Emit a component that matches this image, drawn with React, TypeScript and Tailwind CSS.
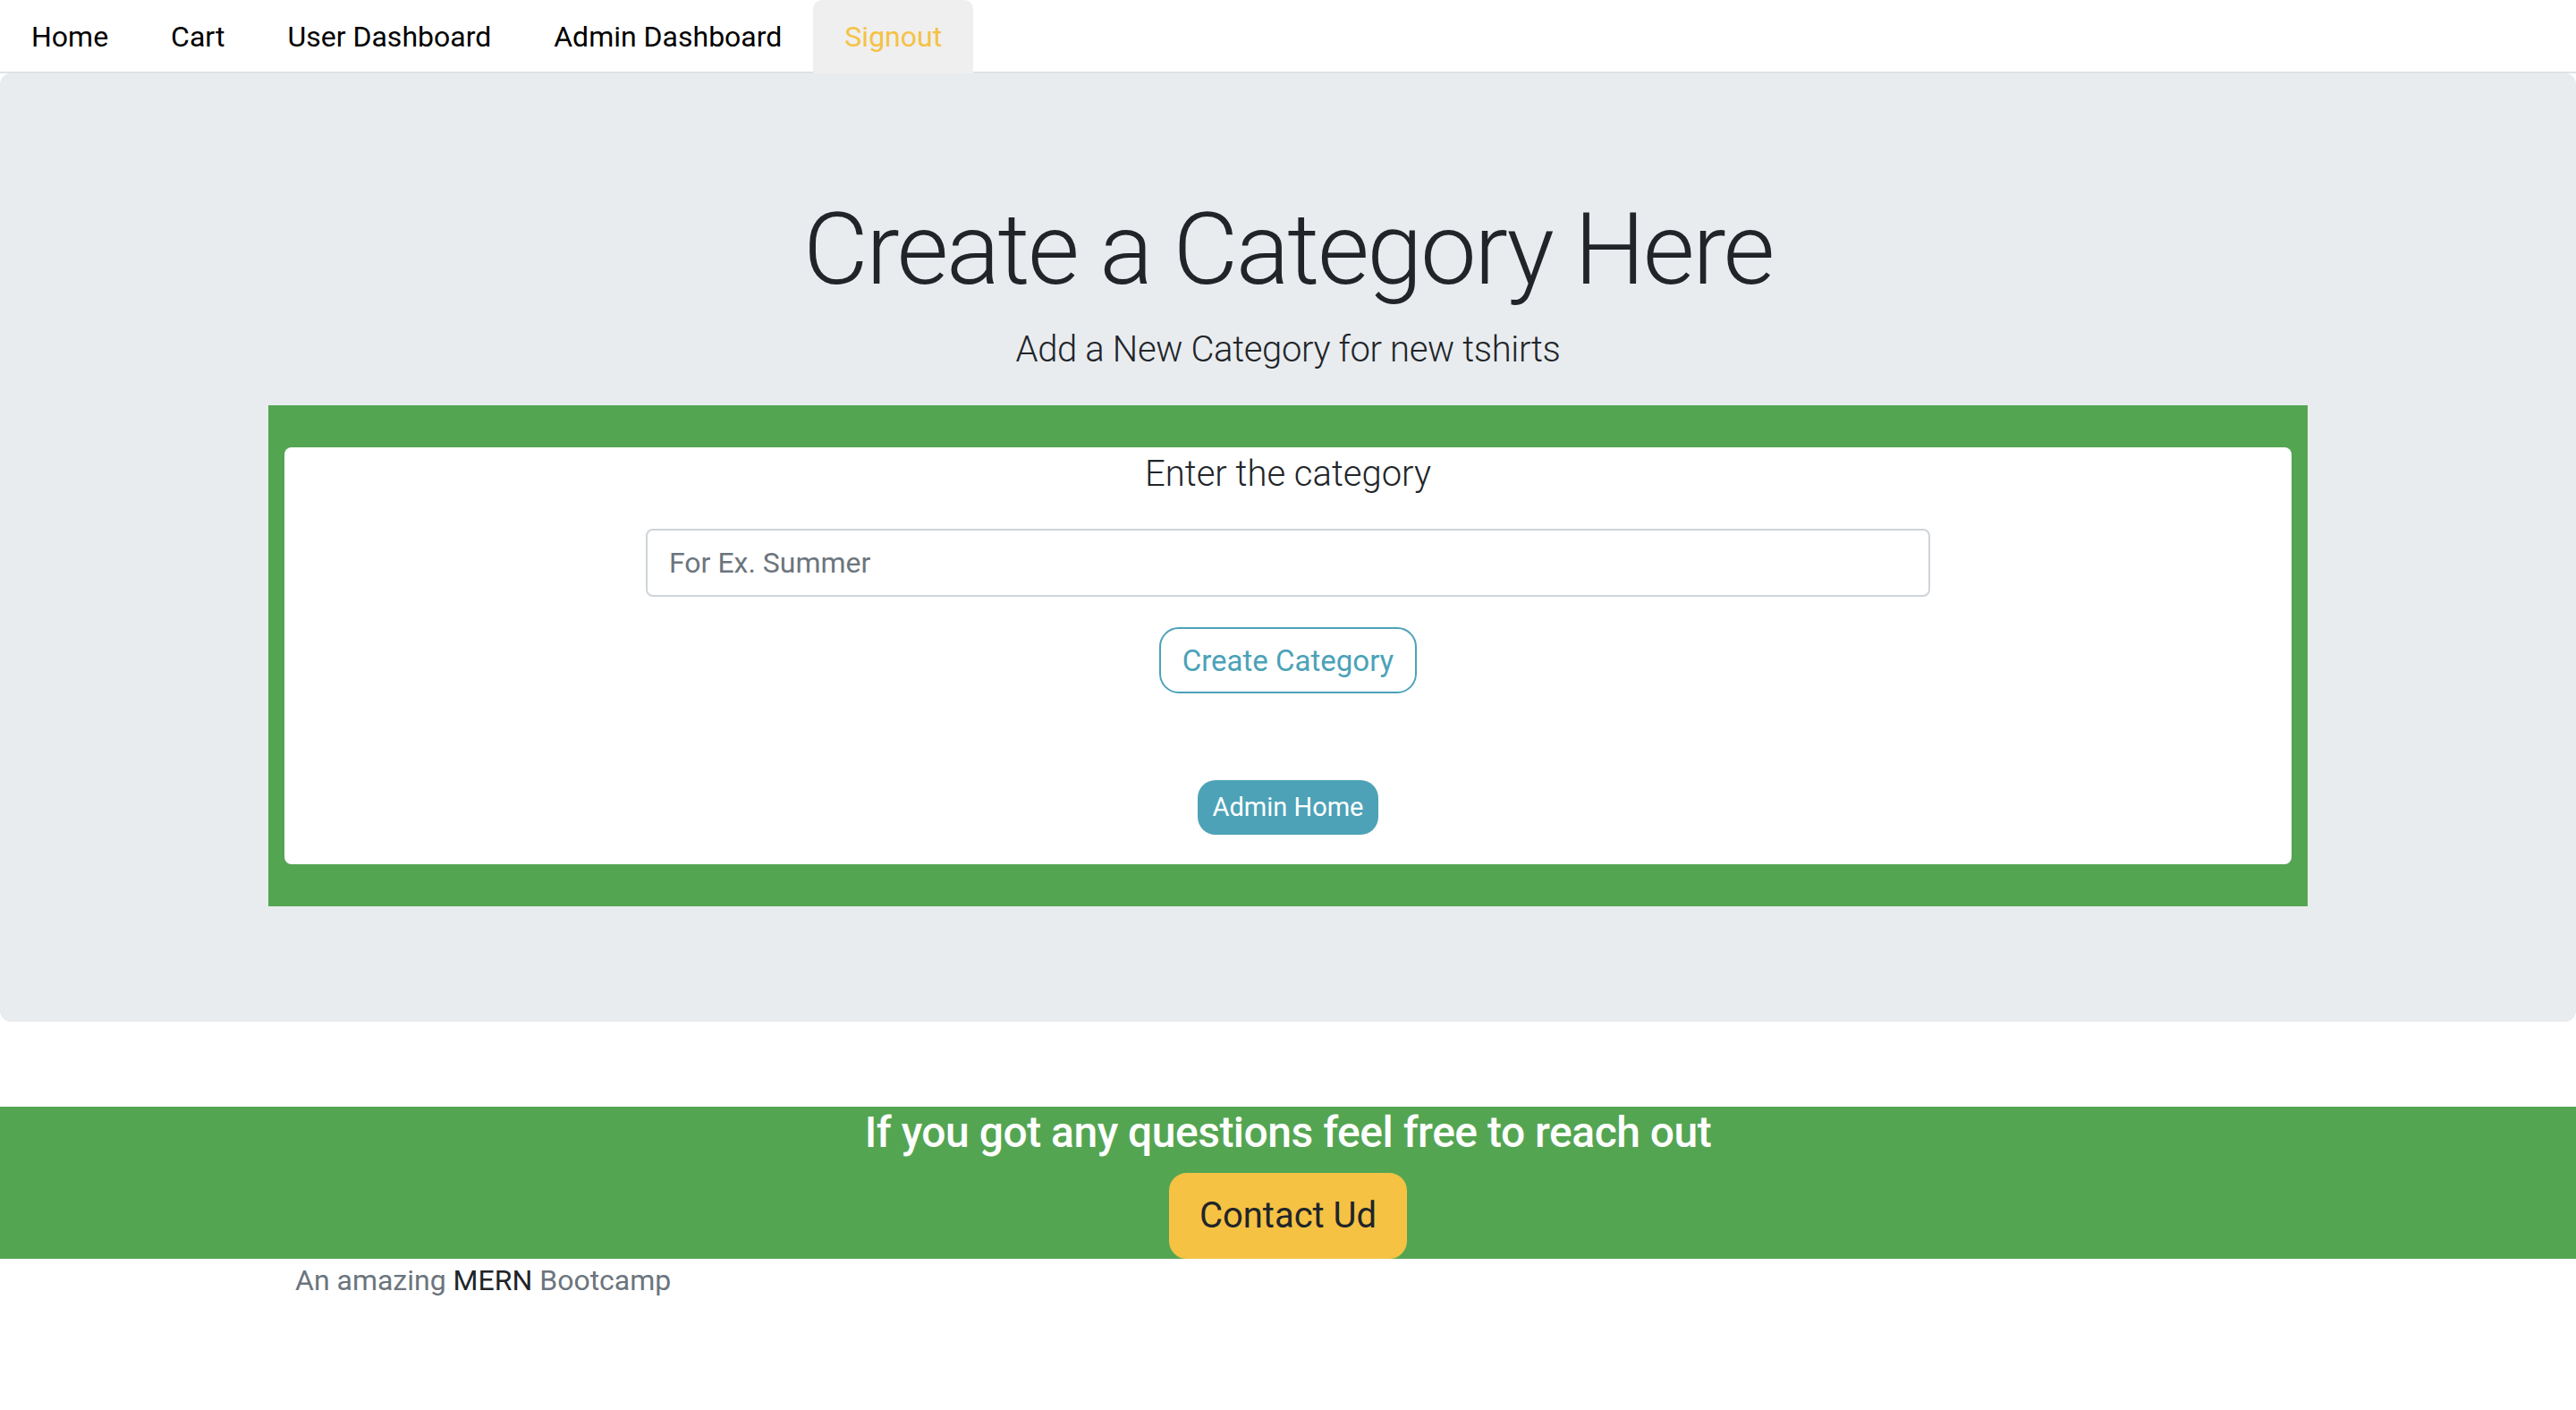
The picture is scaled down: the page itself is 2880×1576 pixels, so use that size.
const navItems = ["Home", "Cart", "User Dashboard", "Admin Dashboard"];

const Nav = () => {
  return (
    <ul className="flex border-b-2 border-[#dee2e6]">
      {navItems.map((item) => (
        <li key={item} className="-mb-[2px] px-[35px] py-[17px] text-[32px] leading-[48px] text-black">
          {item}
        </li>
      ))}
      <li className="-mb-[2px] px-[35px] py-[17px] text-[32px] leading-[48px] text-[#f5c244] bg-[#efefef] rounded-t-[10px]">
        Signout
      </li>
    </ul>
  );
};

const CategoryForm = () => {
  return (
    <div className="mx-auto w-[2280px] bg-[#54a552] py-[47px] px-[18px]">
      <div className="bg-white rounded-[8px] pb-[33px] flex flex-col items-center">
        <p className="text-[40px] font-light leading-[60px]">Enter the category</p>
        <input
          type="text"
          placeholder="For Ex. Summer"
          className="mt-[31px] block w-[1436px] h-[76px] border-2 border-[#ced4da] rounded-[8px] px-6 text-[32px] text-[#495057] placeholder:text-[#6c757d] focus:outline-none"
        />
        <button className="mt-[34px] h-[74px] px-6 border-2 border-[#4ba2b8] text-[#4ba2b8] rounded-[22px] text-[33px] bg-white">
          Create Category
        </button>
        <button className="mt-[97px] h-[61px] px-4 bg-[#4da2b7] text-white rounded-[20px] text-[29px]">
          Admin Home
        </button>
      </div>
    </div>
  );
};

const App = () => {
  return (
    <div className="min-h-screen bg-white font-['Roboto','Liberation_Sans',sans-serif] text-[#212529]">
      <Nav />
      <div className="bg-[#e9ecef] rounded-[12px] pt-[130px] pb-[129px] text-center">
        <h1 className="text-[112px] font-light leading-[1.2] mb-[15px] tracking-[-2.5px]">
          Create a Category Here
        </h1>
        <p className="text-[40px] font-light leading-[1.5] mb-8 tracking-[-0.35px]">
          Add a New Category for new tshirts
        </p>
        <CategoryForm />
      </div>

      <footer className="mt-[95px]">
        <div className="bg-[#54a552] flex flex-col items-center">
          <h4 className="text-[48px] font-medium leading-[1.2] text-white mb-4 tracking-[-0.5px]">
            If you got any questions feel free to reach out
          </h4>
          <button className="bg-[#f5c244] text-[#212529] text-[40px] leading-[60px] px-8 py-4 border-2 border-[#f5c244] rounded-[20px]">
            Contact Ud
          </button>
        </div>
        <div className="mx-auto w-[2280px] px-[30px]">
          <span className="text-[32px] leading-[48px] text-[#6c757d]">
            An amazing <span className="text-[#212529]">MERN</span> Bootcamp
          </span>
        </div>
      </footer>
    </div>
  );
};

export default App;
